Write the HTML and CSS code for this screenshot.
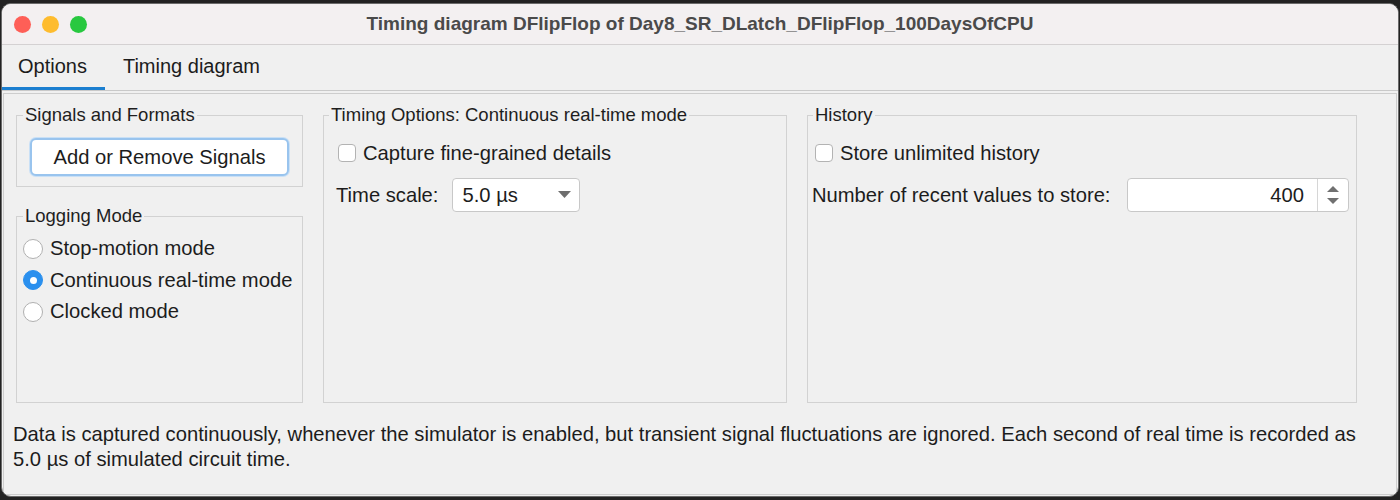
FILE: index.html
```html
<!DOCTYPE html>
<html lang="en">
<head>
    <meta charset="UTF-8">
    <title>Timing diagram DFlipFlop of Day8_SR_DLatch_DFlipFlop_100DaysOfCPU</title>
    <link rel="stylesheet" href="styles.css">
</head>
<body>
    <div class="window">
        <div class="titlebar">
            <div class="lights">
                <span class="light red"></span>
                <span class="light yellow"></span>
                <span class="light green"></span>
            </div>
            <div class="title">Timing diagram DFlipFlop of Day8_SR_DLatch_DFlipFlop_100DaysOfCPU</div>
            <div></div>
        </div>

        <div class="tabs">
            <div class="tab active">Options</div>
            <div class="tab">Timing diagram</div>
        </div>

        <div class="panel">
            <div class="columns">
                <div class="col-left">
                    <fieldset class="group signals">
                        <legend>Signals and Formats</legend>
                        <button class="btn">Add or Remove Signals</button>
                    </fieldset>

                    <fieldset class="group logging">
                        <legend>Logging Mode</legend>
                        <label class="radio-row"><span class="radio"></span>Stop-motion mode</label>
                        <label class="radio-row"><span class="radio checked"></span>Continuous real-time mode</label>
                        <label class="radio-row"><span class="radio"></span>Clocked mode</label>
                    </fieldset>
                </div>

                <fieldset class="group timing">
                    <legend>Timing Options: Continuous real-time mode</legend>
                    <label class="check-row"><span class="check"></span>Capture fine-grained details</label>
                    <div class="field-row">
                        <span>Time scale:</span>
                        <div class="combo">
                            <span>5.0 µs</span>
                            <svg class="combo-arrow" width="13" height="8" viewBox="0 0 13 8"><path d="M0 0 L13 0 L6.5 7 Z" fill="#6e6e6e"/></svg>
                        </div>
                    </div>
                </fieldset>

                <fieldset class="group history">
                    <legend>History</legend>
                    <label class="check-row"><span class="check"></span>Store unlimited history</label>
                    <div class="field-row">
                        <span>Number of recent values to store:</span>
                        <div class="spinner">
                            <span class="spinner-value">400</span>
                            <div class="spinner-arrows">
                                <svg width="12" height="20" viewBox="0 0 12 20">
                                    <path d="M6 1 L12 7 L0 7 Z" fill="#707070"/>
                                    <path d="M0 13 L12 13 L6 19 Z" fill="#707070"/>
                                </svg>
                            </div>
                        </div>
                    </div>
                </fieldset>
            </div>

            <p class="desc">Data is captured continuously, whenever the simulator is enabled, but transient signal fluctuations are ignored. Each second of real time is recorded as 5.0&nbsp;µs of simulated circuit time.</p>
        </div>
    </div>
</body>
</html>
```

FILE: styles.css
```css
body {
    margin: 0;
    padding: 0;
    background-color: #222222;
    font-family: "Liberation Sans", Arial, sans-serif;
    color: #1c1c1c;
}
.window {
    margin: 3px 1px 0 1px;
    height: 494px;
    box-sizing: border-box;
    border: 1px solid #6a6a6a;
    border-radius: 10px;
    background-color: #f0f0f0;
    overflow: hidden;
    display: flex;
    flex-direction: column;
}
.titlebar {
    height: 40px;
    flex-shrink: 0;
    border-bottom: 1px solid #d4d1d2;
    background-color: #f3f0f1;
    display: grid;
    grid-template-columns: 1fr auto 1fr;
    align-items: center;
}
.lights {
    display: flex;
    gap: 11px;
    padding-left: 12px;
}
.light {
    width: 17px;
    height: 17px;
    border-radius: 50%;
}
.light.red { background-color: #fe5f57; }
.light.yellow { background-color: #febc2e; }
.light.green { background-color: #28c840; }
.title {
    font-size: 19px;
    font-weight: bold;
    color: #4a4a4a;
}
.tabs {
    display: flex;
    height: 45px;
    flex-shrink: 0;
    border-bottom: 1px solid #c9c9c9;
}
.tab {
    padding: 0 18px 0 16px;
    line-height: 42px;
    font-size: 20px;
    border-bottom: 3px solid transparent;
}
.tab + .tab {
    padding-left: 18px;
}
.tab.active {
    border-bottom-color: #1b7fd0;
}
.panel {
    flex: 1;
    margin: 2px 1px 1px 1px;
    border: 1px solid #cdcdcd;
    padding: 10px 9px 0 9px;
}
.columns {
    display: flex;
    gap: 20px;
    height: 299px;
    padding-left: 3px;
}
.col-left {
    width: 287px;
    display: flex;
    flex-direction: column;
    gap: 18px;
}
.group {
    margin: 0;
    padding: 0;
    border: 1px solid #d2d2d2;
    min-width: 0;
    font-size: 20.2px;
}
.group legend {
    padding: 0 2px;
    font-size: 18.5px;
    line-height: 22px;
    color: #1e1e1e;
}
.signals {
    padding: 12px 13px 10px 13px;
}
.signals legend { margin-left: -7px; }
.btn {
    display: block;
    width: 100%;
    height: 38px;
    background-color: #ffffff;
    border: 2px solid #99c4ee;
    box-shadow: 0 0 0 1px #c9e0f6;
    border-radius: 6px;
    font-family: inherit;
    font-size: 20.2px;
    color: #1c1c1c;
    padding: 0;
}
.logging {
    flex: 1;
    padding: 6px 6px 0 6px;
}
.logging legend { margin-left: 0; }
.radio-row {
    display: flex;
    align-items: center;
    gap: 7px;
    height: 31.5px;
}
.radio {
    width: 20px;
    height: 20px;
    box-sizing: border-box;
    border: 1px solid #b0b0b0;
    border-radius: 50%;
    background-color: #ffffff;
    display: flex;
    align-items: center;
    justify-content: center;
}
.radio.checked {
    border-color: #2b90ee;
    background-color: #2b90ee;
}
.radio.checked::after {
    content: "";
    width: 7px;
    height: 7px;
    border-radius: 50%;
    background-color: #ffffff;
}
.timing {
    width: 464px;
    box-sizing: border-box;
    padding: 13px 12px 0 12px;
}
.timing legend { margin-left: -7px; }
.history {
    width: 550px;
    box-sizing: border-box;
    padding: 13px 7px 0 4px;
}
.history legend { margin-left: 1px; }
.check-row {
    display: flex;
    align-items: center;
    gap: 7px;
    height: 28px;
    margin-left: 2px;
}
.history .check-row {
    margin-left: 3px;
}
.check {
    width: 18px;
    height: 18px;
    box-sizing: border-box;
    border: 1px solid #b3b3b3;
    border-radius: 4px;
    background-color: #ffffff;
}
.field-row {
    display: flex;
    align-items: center;
    margin-top: 11px;
}
.combo {
    margin-left: 14px;
    width: 128px;
    height: 34px;
    box-sizing: border-box;
    border: 1px solid #c8c8c8;
    border-radius: 4px;
    background-color: #ffffff;
    display: flex;
    align-items: center;
    justify-content: space-between;
    padding: 0 8px 0 9px;
}
.spinner {
    margin-left: auto;
    width: 222px;
    height: 34px;
    box-sizing: border-box;
    border: 1px solid #c8c8c8;
    border-radius: 4px;
    background-color: #ffffff;
    display: flex;
}
.spinner-value {
    flex: 1;
    text-align: right;
    line-height: 32px;
    padding-right: 13px;
}
.spinner-arrows {
    width: 30px;
    border-left: 1px solid #d6d6d6;
    display: flex;
    align-items: center;
    justify-content: center;
}
.desc {
    margin: 19px 0 0 0;
    font-size: 20.2px;
    line-height: 25px;
}
```
